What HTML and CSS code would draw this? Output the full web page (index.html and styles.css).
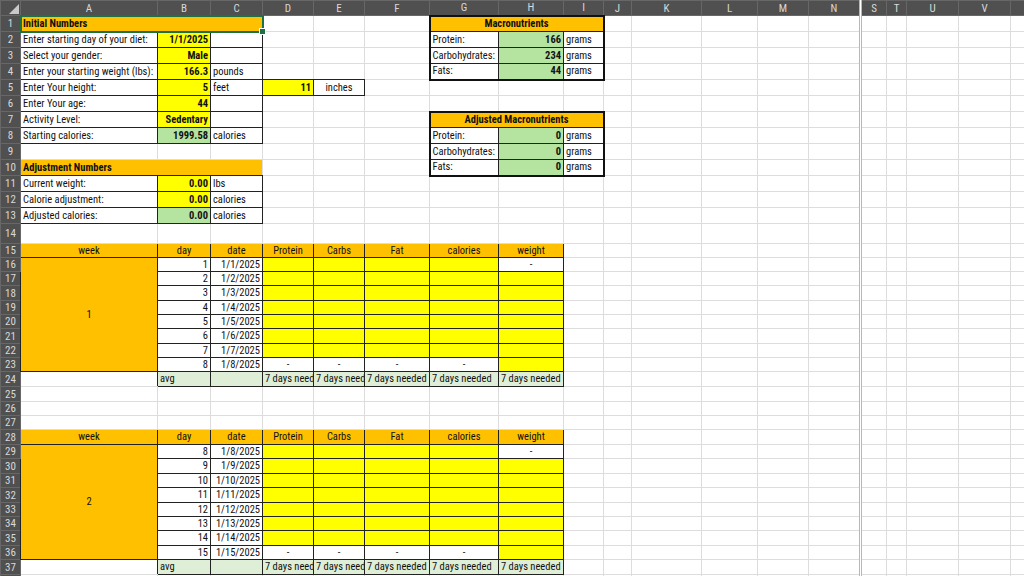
FILE: index.html
```html
<!DOCTYPE html>
<html lang="en">
<head>
<meta charset="utf-8">
<title>Diet tracker</title>
<link rel="stylesheet" href="styles.css">
</head>
<body>
<table class="sheet">
<colgroup>
<col class="c-rh"><col class="c-a"><col class="c-b"><col class="c-c"><col class="c-d"><col class="c-e"><col class="c-f"><col class="c-g"><col class="c-h"><col class="c-i"><col class="c-j"><col class="c-k"><col class="c-l"><col class="c-m"><col class="c-n"><col class="c-s"><col class="c-t"><col class="c-u"><col class="c-v"><col class="c-w">
</colgroup>
<tr class="hdr"><th class="corner"><svg width="20" height="14" viewBox="0 0 20 14"><polygon points="8,13 18,13 18,3" fill="#c9c9c9"/></svg></th><th>A</th><th>B</th><th>C</th><th>D</th><th>E</th><th>F</th><th>G</th><th>H</th><th>I</th><th>J</th><th>K</th><th>L</th><th>M</th><th>N</th><th>S</th><th>T</th><th>U</th><th>V</th><th></th></tr>
<tr class="h16"><th>1</th><td colspan="3" class="t sel">Initial Numbers</td><td></td><td></td><td></td><td colspan="3" class="t c bk bt2 bl2 br2">Macronutrients</td><td></td><td></td><td></td><td></td><td></td><td></td><td></td><td></td><td></td><td></td></tr>
<tr class="h16"><th>2</th><td class="bk">Enter starting day of your diet:</td><td class="y r b bk">1/1/2025</td><td class="bk"></td><td></td><td></td><td></td><td class="bk bl2">Protein:</td><td class="g r b bk">166</td><td class="bk br2">grams</td><td></td><td></td><td></td><td></td><td></td><td></td><td></td><td></td><td></td><td></td></tr>
<tr class="h16"><th>3</th><td class="bk">Select your gender:</td><td class="y r b bk">Male</td><td class="bk"></td><td></td><td></td><td></td><td class="bk bl2">Carbohydrates:</td><td class="g r b bk">234</td><td class="bk br2">grams</td><td></td><td></td><td></td><td></td><td></td><td></td><td></td><td></td><td></td><td></td></tr>
<tr class="h16"><th>4</th><td class="bk">Enter your starting weight (lbs):</td><td class="y r b bk">166.3</td><td class="bk">pounds</td><td class="bbk"></td><td class="bbk"></td><td></td><td class="bk bl2 bb2">Fats:</td><td class="g r b bk bb2">44</td><td class="bk br2 bb2">grams</td><td></td><td></td><td></td><td></td><td></td><td></td><td></td><td></td><td></td><td></td></tr>
<tr class="h16"><th>5</th><td class="bk">Enter Your height:</td><td class="y r b bk">5</td><td class="bk">feet</td><td class="y r b bk">11</td><td class="c bk">inches</td><td></td><td></td><td></td><td></td><td></td><td></td><td></td><td></td><td></td><td></td><td></td><td></td><td></td><td></td></tr>
<tr class="h16"><th>6</th><td class="bk">Enter Your age:</td><td class="y r b bk">44</td><td class="bk"></td><td></td><td></td><td></td><td></td><td></td><td></td><td></td><td></td><td></td><td></td><td></td><td></td><td></td><td></td><td></td><td></td></tr>
<tr class="h16"><th>7</th><td class="bk">Activity Level:</td><td class="y r b bk">Sedentary</td><td class="bk"></td><td></td><td></td><td></td><td colspan="3" class="t c bk bt2 bl2 br2">Adjusted Macronutrients</td><td></td><td></td><td></td><td></td><td></td><td></td><td></td><td></td><td></td><td></td></tr>
<tr class="h16"><th>8</th><td class="bk">Starting calories:</td><td class="g r b bk">1999.58</td><td class="bk">calories</td><td></td><td></td><td></td><td class="bk bl2">Protein:</td><td class="g r b bk">0</td><td class="bk br2">grams</td><td></td><td></td><td></td><td></td><td></td><td></td><td></td><td></td><td></td><td></td></tr>
<tr class="h16"><th>9</th><td></td><td></td><td></td><td></td><td></td><td></td><td class="bk bl2">Carbohydrates:</td><td class="g r b bk">0</td><td class="bk br2">grams</td><td></td><td></td><td></td><td></td><td></td><td></td><td></td><td></td><td></td><td></td></tr>
<tr class="h16"><th>10</th><td colspan="3" class="t bbk">Adjustment Numbers</td><td></td><td></td><td></td><td class="bk bl2 bb2">Fats:</td><td class="g r b bk bb2">0</td><td class="bk br2 bb2">grams</td><td></td><td></td><td></td><td></td><td></td><td></td><td></td><td></td><td></td><td></td></tr>
<tr class="h16"><th>11</th><td class="bk">Current weight:</td><td class="y r b bk">0.00</td><td class="bk">lbs</td><td></td><td></td><td></td><td></td><td></td><td></td><td></td><td></td><td></td><td></td><td></td><td></td><td></td><td></td><td></td><td></td></tr>
<tr class="h16"><th>12</th><td class="bk">Calorie adjustment:</td><td class="y r b bk">0.00</td><td class="bk">calories</td><td></td><td></td><td></td><td></td><td></td><td></td><td></td><td></td><td></td><td></td><td></td><td></td><td></td><td></td><td></td><td></td></tr>
<tr class="h16"><th>13</th><td class="bk">Adjusted calories:</td><td class="g r b bk">0.00</td><td class="bk">calories</td><td></td><td></td><td></td><td></td><td></td><td></td><td></td><td></td><td></td><td></td><td></td><td></td><td></td><td></td><td></td><td></td></tr>
<tr class="h20"><th>14</th><td></td><td></td><td></td><td></td><td></td><td></td><td></td><td></td><td></td><td></td><td></td><td></td><td></td><td></td><td></td><td></td><td></td><td></td><td></td></tr>
<tr class="h14"><th>15</th><td class="o c bk">week</td><td class="o c bk">day</td><td class="o c bk">date</td><td class="o c bk">Protein</td><td class="o c bk">Carbs</td><td class="o c bk">Fat</td><td class="o c bk">calories</td><td class="o c bk">weight</td><td></td><td></td><td></td><td></td><td></td><td></td><td></td><td></td><td></td><td></td><td></td></tr>
<tr class="h14"><th>16</th><td rowspan="8" class="o c bk">1</td><td class="r bk">1</td><td class="r bk">1/1/2025</td><td class="y bk"></td><td class="y bk"></td><td class="y bk"></td><td class="y bk"></td><td class="c bk">-</td><td></td><td></td><td></td><td></td><td></td><td></td><td></td><td></td><td></td><td></td><td></td></tr>
<tr class="h14"><th>17</th><td class="r bk">2</td><td class="r bk">1/2/2025</td><td class="y bk"></td><td class="y bk"></td><td class="y bk"></td><td class="y bk"></td><td class="y bk"></td><td></td><td></td><td></td><td></td><td></td><td></td><td></td><td></td><td></td><td></td><td></td></tr>
<tr class="h15"><th>18</th><td class="r bk">3</td><td class="r bk">1/3/2025</td><td class="y bk"></td><td class="y bk"></td><td class="y bk"></td><td class="y bk"></td><td class="y bk"></td><td></td><td></td><td></td><td></td><td></td><td></td><td></td><td></td><td></td><td></td><td></td></tr>
<tr class="h14"><th>19</th><td class="r bk">4</td><td class="r bk">1/4/2025</td><td class="y bk"></td><td class="y bk"></td><td class="y bk"></td><td class="y bk"></td><td class="y bk"></td><td></td><td></td><td></td><td></td><td></td><td></td><td></td><td></td><td></td><td></td><td></td></tr>
<tr class="h14"><th>20</th><td class="r bk">5</td><td class="r bk">1/5/2025</td><td class="y bk"></td><td class="y bk"></td><td class="y bk"></td><td class="y bk"></td><td class="y bk"></td><td></td><td></td><td></td><td></td><td></td><td></td><td></td><td></td><td></td><td></td><td></td></tr>
<tr class="h15"><th>21</th><td class="r bk">6</td><td class="r bk">1/6/2025</td><td class="y bk"></td><td class="y bk"></td><td class="y bk"></td><td class="y bk"></td><td class="y bk"></td><td></td><td></td><td></td><td></td><td></td><td></td><td></td><td></td><td></td><td></td><td></td></tr>
<tr class="h14"><th>22</th><td class="r bk">7</td><td class="r bk">1/7/2025</td><td class="y bk"></td><td class="y bk"></td><td class="y bk"></td><td class="y bk"></td><td class="y bk"></td><td></td><td></td><td></td><td></td><td></td><td></td><td></td><td></td><td></td><td></td><td></td></tr>
<tr class="h14"><th>23</th><td class="r bk">8</td><td class="r bk">1/8/2025</td><td class="c bk">-</td><td class="c bk">-</td><td class="c bk">-</td><td class="c bk">-</td><td class="y bk"></td><td></td><td></td><td></td><td></td><td></td><td></td><td></td><td></td><td></td><td></td><td></td></tr>
<tr class="h15"><th>24</th><td class="brk"></td><td class="lg bk">avg</td><td class="lg bk"></td><td class="lg bk">7 days need</td><td class="lg bk">7 days need</td><td class="lg bk">7 days needed</td><td class="lg bk">7 days needed</td><td class="lg bk">7 days needed</td><td></td><td></td><td></td><td></td><td></td><td></td><td></td><td></td><td></td><td></td><td></td></tr>
<tr class="h15"><th>25</th><td></td><td></td><td></td><td></td><td></td><td></td><td></td><td></td><td></td><td></td><td></td><td></td><td></td><td></td><td></td><td></td><td></td><td></td><td></td></tr>
<tr class="h14"><th>26</th><td></td><td></td><td></td><td></td><td></td><td></td><td></td><td></td><td></td><td></td><td></td><td></td><td></td><td></td><td></td><td></td><td></td><td></td><td></td></tr>
<tr class="h14"><th>27</th><td></td><td></td><td></td><td></td><td></td><td></td><td></td><td></td><td></td><td></td><td></td><td></td><td></td><td></td><td></td><td></td><td></td><td></td><td></td></tr>
<tr class="h15"><th>28</th><td class="o c bk">week</td><td class="o c bk">day</td><td class="o c bk">date</td><td class="o c bk">Protein</td><td class="o c bk">Carbs</td><td class="o c bk">Fat</td><td class="o c bk">calories</td><td class="o c bk">weight</td><td></td><td></td><td></td><td></td><td></td><td></td><td></td><td></td><td></td><td></td><td></td></tr>
<tr class="h14"><th>29</th><td rowspan="8" class="o c bk">2</td><td class="r bk">8</td><td class="r bk">1/8/2025</td><td class="y bk"></td><td class="y bk"></td><td class="y bk"></td><td class="y bk"></td><td class="c bk">-</td><td></td><td></td><td></td><td></td><td></td><td></td><td></td><td></td><td></td><td></td><td></td></tr>
<tr class="h15"><th>30</th><td class="r bk">9</td><td class="r bk">1/9/2025</td><td class="y bk"></td><td class="y bk"></td><td class="y bk"></td><td class="y bk"></td><td class="y bk"></td><td></td><td></td><td></td><td></td><td></td><td></td><td></td><td></td><td></td><td></td><td></td></tr>
<tr class="h14"><th>31</th><td class="r bk">10</td><td class="r bk">1/10/2025</td><td class="y bk"></td><td class="y bk"></td><td class="y bk"></td><td class="y bk"></td><td class="y bk"></td><td></td><td></td><td></td><td></td><td></td><td></td><td></td><td></td><td></td><td></td><td></td></tr>
<tr class="h15"><th>32</th><td class="r bk">11</td><td class="r bk">1/11/2025</td><td class="y bk"></td><td class="y bk"></td><td class="y bk"></td><td class="y bk"></td><td class="y bk"></td><td></td><td></td><td></td><td></td><td></td><td></td><td></td><td></td><td></td><td></td><td></td></tr>
<tr class="h14"><th>33</th><td class="r bk">12</td><td class="r bk">1/12/2025</td><td class="y bk"></td><td class="y bk"></td><td class="y bk"></td><td class="y bk"></td><td class="y bk"></td><td></td><td></td><td></td><td></td><td></td><td></td><td></td><td></td><td></td><td></td><td></td></tr>
<tr class="h14"><th>34</th><td class="r bk">13</td><td class="r bk">1/13/2025</td><td class="y bk"></td><td class="y bk"></td><td class="y bk"></td><td class="y bk"></td><td class="y bk"></td><td></td><td></td><td></td><td></td><td></td><td></td><td></td><td></td><td></td><td></td><td></td></tr>
<tr class="h15"><th>35</th><td class="r bk">14</td><td class="r bk">1/14/2025</td><td class="y bk"></td><td class="y bk"></td><td class="y bk"></td><td class="y bk"></td><td class="y bk"></td><td></td><td></td><td></td><td></td><td></td><td></td><td></td><td></td><td></td><td></td><td></td></tr>
<tr class="h14"><th>36</th><td class="r bk">15</td><td class="r bk">1/15/2025</td><td class="c bk">-</td><td class="c bk">-</td><td class="c bk">-</td><td class="c bk">-</td><td class="y bk"></td><td></td><td></td><td></td><td></td><td></td><td></td><td></td><td></td><td></td><td></td><td></td></tr>
<tr class="h15"><th>37</th><td class="brk"></td><td class="lg bk">avg</td><td class="lg bk"></td><td class="lg bk">7 days need</td><td class="lg bk">7 days need</td><td class="lg bk">7 days needed</td><td class="lg bk">7 days needed</td><td class="lg bk">7 days needed</td><td></td><td></td><td></td><td></td><td></td><td></td><td></td><td></td><td></td><td></td><td></td></tr>
<tr class="h15"><th></th><td></td><td></td><td></td><td></td><td></td><td></td><td></td><td></td><td></td><td></td><td></td><td></td><td></td><td></td><td></td><td></td><td></td><td></td><td></td></tr>
</table>
</body>
</html>
```

FILE: styles.css
```css
html, body {
  margin: 0;
  padding: 0;
  background: #ffffff;
  overflow: hidden;
}
body {
  width: 1024px;
  height: 576px;
  font-family: "Liberation Sans Narrow", "Arial Narrow", "Roboto Condensed", "DejaVu Sans Condensed", "Liberation Sans", sans-serif;
  font-size: 10.5px;
  color: #111111;
}
.sheet {
  border-collapse: collapse;
  table-layout: fixed;
  width: 1070px;
}
.c-rh { width: 20px; }
.c-a { width: 137px; }
.c-b { width: 53px; }
.c-c { width: 52px; }
.c-d { width: 51px; }
.c-e { width: 51px; }
.c-f { width: 65px; }
.c-g { width: 69px; }
.c-h { width: 65px; }
.c-i { width: 40px; }
.c-j { width: 28px; }
.c-k { width: 70px; }
.c-l { width: 56px; }
.c-m { width: 51px; }
.c-n { width: 52px; }
.c-s { width: 26px; border-left: 3px double #b8b8b8; }
.c-t { width: 20px; }
.c-u { width: 52px; }
.c-v { width: 52px; }
.c-w { width: 60px; }

.sheet th {
  background: #505050;
  color: #d8d8d8;
  font-weight: normal;
  font-size: 11px;
  border: 1px solid #676767;
  padding: 0;
  text-align: center;
  overflow: hidden;
  white-space: nowrap;
}
.sheet .corner { text-align: right; vertical-align: bottom; line-height: 0; }
.sheet .corner svg { display: block; }
.sheet td {
  border: 1px solid #dddddd;
  padding: 0 2px;
  white-space: nowrap;
  overflow: hidden;
  line-height: 12px;
  vertical-align: middle;
}
.hdr { height: 15px; }
.h14 { height: 14px; }
.h15 { height: 15px; }
.h16 { height: 16px; }
.h20 { height: 20px; }

.t { background: #ffc000; font-weight: bold; }
.o { background: #ffc000; }
.y { background: #ffff00; }
.g { background: #b4e4a0; }
.lg { background: #dfeed7; }
.r { text-align: right; }
.c { text-align: center; }
.b { font-weight: bold; }

.sheet .bk { border: 1px solid #222222; }
.sheet .bbk { border-bottom: 1px solid #222222; }
.sheet .brk { border-right: 1px solid #222222; }
.sheet .bt2 { border-top: 2px solid #111111; }
.sheet .bb2 { border-bottom: 2px solid #111111; }
.sheet .bl2 { border-left: 2px solid #111111; }
.sheet .br2 { border-right: 2px solid #111111; }

.sheet .sel {
  position: relative;
  overflow: visible;
  outline: 2px solid #1e7145;
  outline-offset: -1px;
}
.sheet .sel::after {
  content: "";
  position: absolute;
  right: -4px;
  bottom: -4px;
  width: 5px;
  height: 5px;
  background: #1e7145;
  border: 1px solid #ffffff;
  z-index: 2;
}
```
